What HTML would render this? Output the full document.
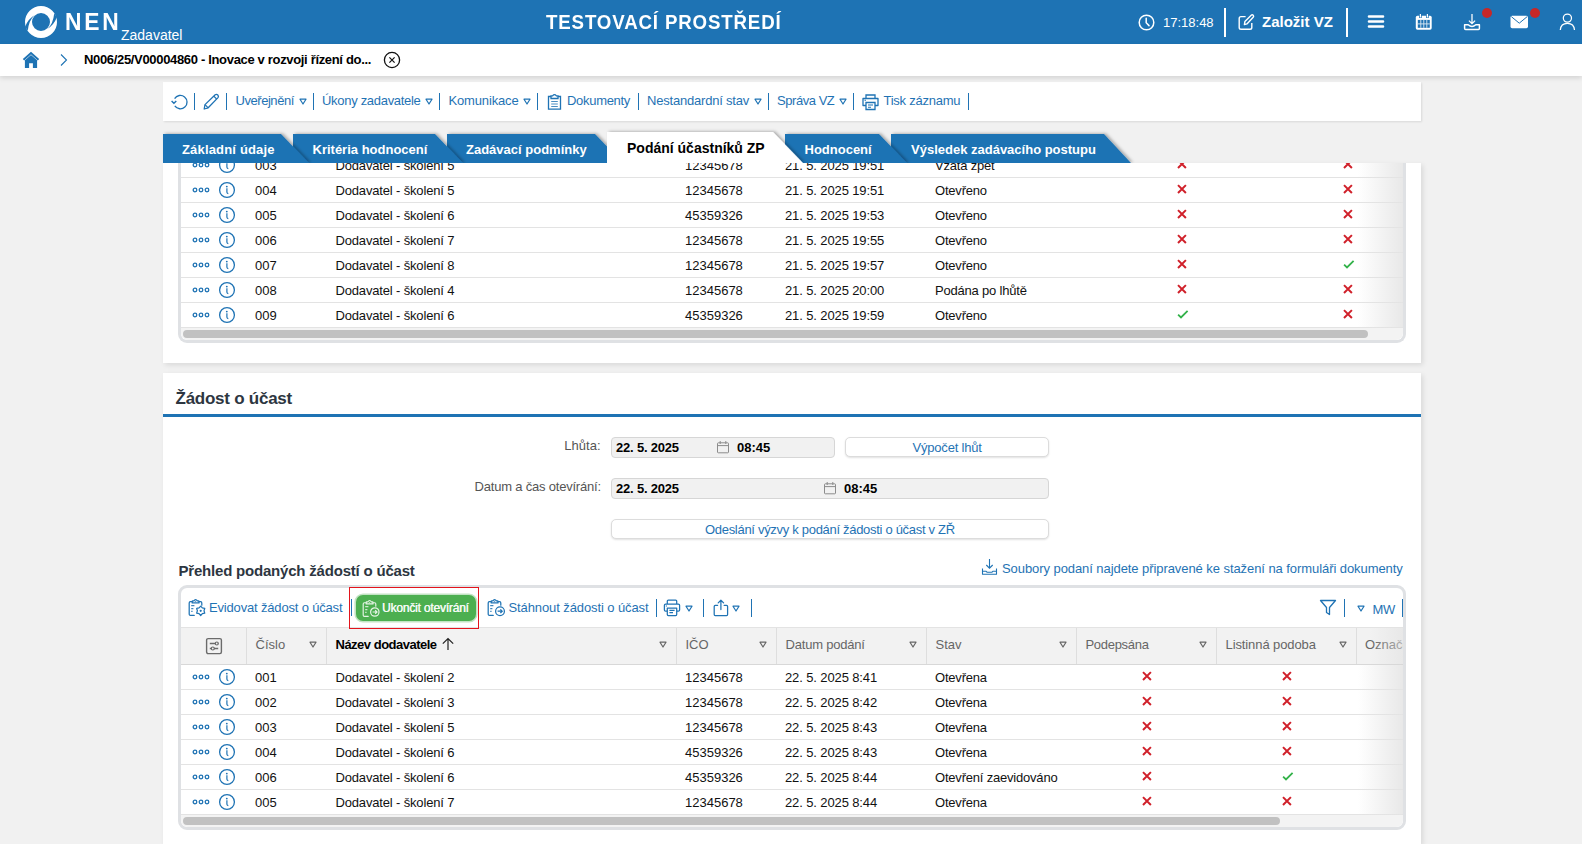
<!DOCTYPE html>
<html><head><meta charset="utf-8"><title>NEN</title>
<style>
html,body{margin:0;padding:0;width:1582px;height:844px;overflow:hidden;}
body{width:1582px;height:844px;overflow:hidden;position:relative;background:#f1f1f1;font-family:"Liberation Sans", sans-serif;}
.a{position:absolute;box-sizing:border-box;}
svg.a{overflow:visible}
.t{position:absolute;white-space:nowrap;font-family:"Liberation Sans", sans-serif;}
</style></head><body>
<div class="a" style="left:0px;top:0px;width:1582px;height:44px;background:#1e73b4"></div>
<svg class="a" style="left:24px;top:5px;" width="34" height="34" viewBox="0 0 34 34">
<circle cx="17" cy="17" r="12.5" fill="none" stroke="#fff" stroke-width="7"/>
<path d="M10.6 10.2 Q4.2 13.6 1.0 21.9 L3.8 25.6 Q4.8 15.2 10.6 10.2 Z" fill="#1e73b4"/>
<path d="M10.6 10.2 Q4.2 13.6 1.0 21.9 L3.8 25.6 Q4.8 15.2 10.6 10.2 Z" fill="#1e73b4" transform="rotate(180 17 17)"/>
</svg>
<div class="t" style="left:65px;top:10px;font-size:24px;line-height:24px;color:#fff;font-weight:bold;letter-spacing:2.9px;transform:scaleX(0.95);transform-origin:0 0">NEN</div>
<div class="t" style="left:121px;top:28px;font-size:14px;line-height:14px;color:#fff;">Zadavatel</div>
<div class="t" style="left:546px;top:12px;font-size:20px;line-height:20px;color:#fff;font-weight:bold;letter-spacing:0.9px;transform:scaleX(0.935);transform-origin:0 0">TESTOVACÍ PROSTŘEDÍ</div>
<svg class="a" style="left:1138px;top:14px;" width="17" height="17" viewBox="0 0 17 17"><circle cx="8.5" cy="8.5" r="7.3" fill="none" stroke="#fff" stroke-width="1.5"/><path d="M8.2 4.2 V8.8 L11 11.6" fill="none" stroke="#fff" stroke-width="1.5" stroke-linecap="round"/></svg>
<div class="t" style="left:1163px;top:16px;font-size:13px;line-height:13px;color:#fff;">17:18:48</div>
<div class="a" style="left:1224px;top:8px;width:2px;height:29px;background:#fff"></div>
<svg class="a" style="left:1237px;top:13px;" width="19" height="18" viewBox="0 0 19 18"><path d="M8.6 3.6 H4 Q2.2 3.6 2.2 5.4 V14.4 Q2.2 16.2 4 16.2 H13 Q14.8 16.2 14.8 14.4 V10" fill="none" stroke="#fff" stroke-width="1.4"/><path d="M7.4 11.6 L7.9 8.6 L14.2 2.2 Q15.2 1.3 16.2 2.2 Q17.1 3.2 16.2 4.2 L9.9 10.9 Z" fill="none" stroke="#fff" stroke-width="1.4" stroke-linejoin="round"/></svg>
<div class="t" style="left:1262px;top:14px;font-size:15px;line-height:15px;color:#fff;font-weight:bold;">Založit VZ</div>
<div class="a" style="left:1346px;top:8px;width:2px;height:29px;background:#fff"></div>
<svg class="a" style="left:1367px;top:14px;" width="18" height="16" viewBox="0 0 18 16"><path d="M2 2.5 H16 M2 7.5 H16 M2 12.5 H16" stroke="#fff" stroke-width="2.6" stroke-linecap="round"/></svg>
<svg class="a" style="left:1415px;top:13px;" width="18" height="18" viewBox="0 0 18 18"><rect x="0.8" y="2.8" width="15.9" height="13.9" rx="1.6" fill="#fff"/><rect x="2.8" y="6.9" width="12" height="7.9" fill="#1e73b4"/><path d="M5.8 6.9 V14.8 M8.8 6.9 V14.8 M11.8 6.9 V14.8 M2.8 10.9 H14.8" stroke="#fff" stroke-width="0.9" opacity="0.85"/><path d="M5.4 0.6 V5 M12.4 0.6 V5" stroke="#1e73b4" stroke-width="2.6"/><path d="M5.4 1 V4.6 M12.4 1 V4.6" stroke="#fff" stroke-width="1.2"/></svg>
<svg class="a" style="left:1463px;top:13px;" width="18" height="18" viewBox="0 0 18 18"><path d="M9 1 V10.6 M5.9 7.6 L9 10.7 L12.1 7.6" fill="none" stroke="#fff" stroke-width="1.25"/><path d="M1.6 11.8 H5.2 Q9 15.2 12.8 11.8 H16.4 V15.6 Q16.4 16.6 15.4 16.6 H2.6 Q1.6 16.6 1.6 15.6 Z" fill="none" stroke="#fff" stroke-width="1.5" stroke-linejoin="round"/></svg>
<div class="a" style="left:1482px;top:8px;width:10px;height:10px;border-radius:50%;background:#c62828"></div>
<svg class="a" style="left:1510px;top:15px;" width="19" height="14" viewBox="0 0 19 14"><rect x="0.5" y="0.8" width="17.5" height="12.4" rx="1.6" fill="#fff"/><path d="M1.3 1.6 L9.25 8.2 L17.2 1.6" fill="none" stroke="#1e73b4" stroke-width="1"/></svg>
<div class="a" style="left:1530px;top:8px;width:10px;height:10px;border-radius:50%;background:#c62828"></div>
<svg class="a" style="left:1559px;top:13px;" width="17" height="18" viewBox="0 0 17 18"><circle cx="8.4" cy="5.1" r="4.1" fill="none" stroke="#fff" stroke-width="1.25"/><path d="M1.3 17 C1.6 12.6 4.6 10.4 8.4 10.4 C12.2 10.4 15.2 12.6 15.5 17" fill="none" stroke="#fff" stroke-width="1.25"/></svg>
<div class="a" style="left:0px;top:44px;width:1582px;height:32px;background:#fff;box-shadow:0 2px 5px rgba(0,0,0,0.13);z-index:2"></div>
<svg class="a" style="left:22px;top:51px;z-index:3" width="18" height="18" viewBox="0 0 18 18"><path d="M1.5 8.8 L9 2 L16.5 8.8" fill="none" stroke="#1e73b4" stroke-width="2"/><path d="M2.9 9.3 L9 4 L15.1 9.3 V17 H10.9 V12.3 H7.1 V17 H2.9 Z" fill="#1e73b4"/></svg>
<svg class="a" style="left:59px;top:53px;z-index:3" width="10" height="14" viewBox="0 0 10 14"><path d="M2 1.5 L7.5 7 L2 12.5" fill="none" stroke="#1e73b4" stroke-width="1.1"/></svg>
<div class="t" style="left:84px;top:53px;font-size:13px;line-height:13px;color:#000;font-weight:bold;letter-spacing:-0.33px;z-index:3">N006/25/V00004860 - Inovace v rozvoji řízení do...</div>
<svg class="a" style="left:383px;top:51px;z-index:3" width="18" height="18" viewBox="0 0 18 18"><circle cx="9" cy="9" r="7.6" fill="none" stroke="#111" stroke-width="1.3"/><path d="M6.4 6.4 L11.6 11.6 M11.6 6.4 L6.4 11.6" stroke="#111" stroke-width="1.2"/></svg>
<div class="a" style="left:163px;top:82px;width:1258px;height:39px;background:#fff;box-shadow:1px 1px 2px rgba(0,0,0,0.1)"></div>
<svg class="a" style="left:169px;top:93px;" width="20" height="18" viewBox="0 0 20 18"><path d="M5.6 5.6 A6.7 6.7 0 1 1 5.8 12.9" fill="none" stroke="#1f73b4" stroke-width="1.3"/><path d="M2.6 7.9 L4.9 10.3 L7.3 7.9" fill="none" stroke="#1f73b4" stroke-width="1.4"/></svg>
<div class="a" style="left:194px;top:93px;width:1px;height:17px;background:#1f73b4"></div>
<svg class="a" style="left:202px;top:93px;" width="18" height="18" viewBox="0 0 18 18"><path d="M2.2 16 L3 11.6 L13.2 1.8 Q14.6 0.8 15.8 2 Q17 3.2 16 4.6 L6.2 14.8 Z" fill="none" stroke="#1f73b4" stroke-width="1.3" stroke-linejoin="round"/><path d="M11.8 3.2 L14.6 6 M3 11.6 L6.2 14.8" stroke="#1f73b4" stroke-width="1.2"/></svg>
<div class="a" style="left:226px;top:93px;width:1px;height:17px;background:#1f73b4"></div>
<div class="t" style="left:235.5px;top:94px;font-size:13px;line-height:13px;color:#1f73b4;letter-spacing:-0.45px;">Uveřejnění</div>
<svg class="a" style="left:298.5px;top:98px;" width="8" height="7" viewBox="0 0 8 7"><path d="M1 1.2 H7 L4 6 Z" fill="none" stroke="#1f73b4" stroke-width="1.2" stroke-linejoin="round"/></svg>
<div class="a" style="left:313px;top:93px;width:1px;height:17px;background:#1f73b4"></div>
<div class="t" style="left:322px;top:94px;font-size:13px;line-height:13px;color:#1f73b4;letter-spacing:-0.3px;">Úkony zadavatele</div>
<svg class="a" style="left:425px;top:98px;" width="8" height="7" viewBox="0 0 8 7"><path d="M1 1.2 H7 L4 6 Z" fill="none" stroke="#1f73b4" stroke-width="1.2" stroke-linejoin="round"/></svg>
<div class="a" style="left:439px;top:93px;width:1px;height:17px;background:#1f73b4"></div>
<div class="t" style="left:448.5px;top:94px;font-size:13px;line-height:13px;color:#1f73b4;letter-spacing:-0.15px;">Komunikace</div>
<svg class="a" style="left:523px;top:98px;" width="8" height="7" viewBox="0 0 8 7"><path d="M1 1.2 H7 L4 6 Z" fill="none" stroke="#1f73b4" stroke-width="1.2" stroke-linejoin="round"/></svg>
<div class="a" style="left:537px;top:93px;width:1px;height:17px;background:#1f73b4"></div>
<svg class="a" style="left:547px;top:93px;" width="15" height="18" viewBox="0 0 15 18"><path d="M4 3.5 H1.5 V16.2 H13.5 V3.5 H11" fill="none" stroke="#1f73b4" stroke-width="1.3"/><path d="M4 5.5 V2.8 H5.6 Q7.5 0.5 9.4 2.8 H11 V5.5 Z" fill="none" stroke="#1f73b4" stroke-width="1.3"/><path d="M4.2 8.5 H10.8 M4.2 11 H10.8 M4.2 13.5 H10.8" stroke="#1f73b4" stroke-width="1.2" opacity="0.8"/></svg>
<div class="t" style="left:567px;top:94px;font-size:13px;line-height:13px;color:#1f73b4;letter-spacing:-0.3px;">Dokumenty</div>
<div class="a" style="left:638px;top:93px;width:1px;height:17px;background:#1f73b4"></div>
<div class="t" style="left:647px;top:94px;font-size:13px;line-height:13px;color:#1f73b4;letter-spacing:-0.2px;">Nestandardní stav</div>
<svg class="a" style="left:753.5px;top:98px;" width="8" height="7" viewBox="0 0 8 7"><path d="M1 1.2 H7 L4 6 Z" fill="none" stroke="#1f73b4" stroke-width="1.2" stroke-linejoin="round"/></svg>
<div class="a" style="left:768px;top:93px;width:1px;height:17px;background:#1f73b4"></div>
<div class="t" style="left:777px;top:94px;font-size:13px;line-height:13px;color:#1f73b4;letter-spacing:-0.45px;">Správa VZ</div>
<svg class="a" style="left:839px;top:98px;" width="8" height="7" viewBox="0 0 8 7"><path d="M1 1.2 H7 L4 6 Z" fill="none" stroke="#1f73b4" stroke-width="1.2" stroke-linejoin="round"/></svg>
<div class="a" style="left:853px;top:93px;width:1px;height:17px;background:#1f73b4"></div>
<svg class="a" style="left:861px;top:93px;" width="19" height="18" viewBox="0 0 19 18"><path d="M5 5 V2 H14 V5" fill="none" stroke="#1f73b4" stroke-width="1.3"/><path d="M5 12.5 H2 V5.5 H17 V12.5 H14" fill="none" stroke="#1f73b4" stroke-width="1.3" stroke-linejoin="round"/><path d="M5 9.5 H14 V16.5 H5 Z" fill="none" stroke="#1f73b4" stroke-width="1.3"/><path d="M7 12 H12 M7 14.2 H10" stroke="#1f73b4" stroke-width="1.1"/><path d="M3.5 7.3 H5" stroke="#1f73b4" stroke-width="1.1"/></svg>
<div class="t" style="left:883.5px;top:94px;font-size:13px;line-height:13px;color:#1f73b4;letter-spacing:-0.25px;">Tisk záznamu</div>
<div class="a" style="left:968px;top:93px;width:1px;height:17px;background:#1f73b4"></div>
<div class="a" style="left:163px;top:163px;width:1258px;height:200px;background:#fff;box-shadow:2px 2px 5px rgba(0,0,0,0.1)"></div>
<div class="a" style="left:178px;top:163px;width:1228px;height:180px;border:3px solid #dfe1e4;border-top:none;border-radius:0 0 9px 9px;background:#fff"></div>
<div class="a" style="left:181px;top:163px;width:1222px;height:177px;overflow:hidden">
<svg class="a" style="left:10px;top:-1px;" width="19" height="6" viewBox="0 0 19 6"><circle cx="4" cy="3" r="1.8" fill="none" stroke="#1f73b4" stroke-width="1.3"/><circle cx="10" cy="3" r="1.8" fill="none" stroke="#1f73b4" stroke-width="1.3"/><circle cx="16" cy="3" r="1.8" fill="none" stroke="#1f73b4" stroke-width="1.3"/></svg>
<svg class="a" style="left:37px;top:-7px;" width="18" height="18" viewBox="0 0 18 18"><circle cx="9" cy="9" r="7.4" fill="none" stroke="#1f73b4" stroke-width="1.3"/><circle cx="8.8" cy="5.6" r="0.9" fill="#1f73b4"/><path d="M8.3 7.8 L8.9 7.8 L8.9 11.2 Q9 12.3 10.3 12.6" fill="none" stroke="#1f73b4" stroke-width="1.2"/></svg>
<div class="t" style="left:74px;top:-4px;font-size:13px;line-height:13px;color:#111;">003</div>
<div class="t" style="left:154.5px;top:-4px;font-size:13px;line-height:13px;color:#111;letter-spacing:-0.16px;">Dodavatel - školení 5</div>
<div class="t" style="left:504px;top:-4px;font-size:13px;line-height:13px;color:#111;">12345678</div>
<div class="t" style="left:604px;top:-4px;font-size:13px;line-height:13px;color:#111;letter-spacing:-0.12px;">21. 5. 2025 19:51</div>
<div class="t" style="left:754px;top:-4px;font-size:13px;line-height:13px;color:#111;letter-spacing:-0.2px;">Vzata zpet</div>
<svg class="a" style="left:996.4000000000001px;top:-4px;" width="10" height="10" viewBox="0 0 10 10"><path d="M1 1.1 L8.9 9 M8.9 1.1 L1 9" stroke="#d0202a" stroke-width="2"/></svg>
<svg class="a" style="left:1162.4px;top:-4px;" width="10" height="10" viewBox="0 0 10 10"><path d="M1 1.1 L8.9 9 M8.9 1.1 L1 9" stroke="#d0202a" stroke-width="2"/></svg>
<div class="a" style="left:0px;top:14px;width:1222px;height:1px;background:#e3e3e3"></div>
<svg class="a" style="left:10px;top:24px;" width="19" height="6" viewBox="0 0 19 6"><circle cx="4" cy="3" r="1.8" fill="none" stroke="#1f73b4" stroke-width="1.3"/><circle cx="10" cy="3" r="1.8" fill="none" stroke="#1f73b4" stroke-width="1.3"/><circle cx="16" cy="3" r="1.8" fill="none" stroke="#1f73b4" stroke-width="1.3"/></svg>
<svg class="a" style="left:37px;top:18px;" width="18" height="18" viewBox="0 0 18 18"><circle cx="9" cy="9" r="7.4" fill="none" stroke="#1f73b4" stroke-width="1.3"/><circle cx="8.8" cy="5.6" r="0.9" fill="#1f73b4"/><path d="M8.3 7.8 L8.9 7.8 L8.9 11.2 Q9 12.3 10.3 12.6" fill="none" stroke="#1f73b4" stroke-width="1.2"/></svg>
<div class="t" style="left:74px;top:21px;font-size:13px;line-height:13px;color:#111;">004</div>
<div class="t" style="left:154.5px;top:21px;font-size:13px;line-height:13px;color:#111;letter-spacing:-0.16px;">Dodavatel - školení 5</div>
<div class="t" style="left:504px;top:21px;font-size:13px;line-height:13px;color:#111;">12345678</div>
<div class="t" style="left:604px;top:21px;font-size:13px;line-height:13px;color:#111;letter-spacing:-0.12px;">21. 5. 2025 19:51</div>
<div class="t" style="left:754px;top:21px;font-size:13px;line-height:13px;color:#111;letter-spacing:-0.2px;">Otevřeno</div>
<svg class="a" style="left:996.4000000000001px;top:21px;" width="10" height="10" viewBox="0 0 10 10"><path d="M1 1.1 L8.9 9 M8.9 1.1 L1 9" stroke="#d0202a" stroke-width="2"/></svg>
<svg class="a" style="left:1162.4px;top:21px;" width="10" height="10" viewBox="0 0 10 10"><path d="M1 1.1 L8.9 9 M8.9 1.1 L1 9" stroke="#d0202a" stroke-width="2"/></svg>
<div class="a" style="left:0px;top:39px;width:1222px;height:1px;background:#e3e3e3"></div>
<svg class="a" style="left:10px;top:49px;" width="19" height="6" viewBox="0 0 19 6"><circle cx="4" cy="3" r="1.8" fill="none" stroke="#1f73b4" stroke-width="1.3"/><circle cx="10" cy="3" r="1.8" fill="none" stroke="#1f73b4" stroke-width="1.3"/><circle cx="16" cy="3" r="1.8" fill="none" stroke="#1f73b4" stroke-width="1.3"/></svg>
<svg class="a" style="left:37px;top:43px;" width="18" height="18" viewBox="0 0 18 18"><circle cx="9" cy="9" r="7.4" fill="none" stroke="#1f73b4" stroke-width="1.3"/><circle cx="8.8" cy="5.6" r="0.9" fill="#1f73b4"/><path d="M8.3 7.8 L8.9 7.8 L8.9 11.2 Q9 12.3 10.3 12.6" fill="none" stroke="#1f73b4" stroke-width="1.2"/></svg>
<div class="t" style="left:74px;top:46px;font-size:13px;line-height:13px;color:#111;">005</div>
<div class="t" style="left:154.5px;top:46px;font-size:13px;line-height:13px;color:#111;letter-spacing:-0.16px;">Dodavatel - školení 6</div>
<div class="t" style="left:504px;top:46px;font-size:13px;line-height:13px;color:#111;">45359326</div>
<div class="t" style="left:604px;top:46px;font-size:13px;line-height:13px;color:#111;letter-spacing:-0.12px;">21. 5. 2025 19:53</div>
<div class="t" style="left:754px;top:46px;font-size:13px;line-height:13px;color:#111;letter-spacing:-0.2px;">Otevřeno</div>
<svg class="a" style="left:996.4000000000001px;top:46px;" width="10" height="10" viewBox="0 0 10 10"><path d="M1 1.1 L8.9 9 M8.9 1.1 L1 9" stroke="#d0202a" stroke-width="2"/></svg>
<svg class="a" style="left:1162.4px;top:46px;" width="10" height="10" viewBox="0 0 10 10"><path d="M1 1.1 L8.9 9 M8.9 1.1 L1 9" stroke="#d0202a" stroke-width="2"/></svg>
<div class="a" style="left:0px;top:64px;width:1222px;height:1px;background:#e3e3e3"></div>
<svg class="a" style="left:10px;top:74px;" width="19" height="6" viewBox="0 0 19 6"><circle cx="4" cy="3" r="1.8" fill="none" stroke="#1f73b4" stroke-width="1.3"/><circle cx="10" cy="3" r="1.8" fill="none" stroke="#1f73b4" stroke-width="1.3"/><circle cx="16" cy="3" r="1.8" fill="none" stroke="#1f73b4" stroke-width="1.3"/></svg>
<svg class="a" style="left:37px;top:68px;" width="18" height="18" viewBox="0 0 18 18"><circle cx="9" cy="9" r="7.4" fill="none" stroke="#1f73b4" stroke-width="1.3"/><circle cx="8.8" cy="5.6" r="0.9" fill="#1f73b4"/><path d="M8.3 7.8 L8.9 7.8 L8.9 11.2 Q9 12.3 10.3 12.6" fill="none" stroke="#1f73b4" stroke-width="1.2"/></svg>
<div class="t" style="left:74px;top:71px;font-size:13px;line-height:13px;color:#111;">006</div>
<div class="t" style="left:154.5px;top:71px;font-size:13px;line-height:13px;color:#111;letter-spacing:-0.16px;">Dodavatel - školení 7</div>
<div class="t" style="left:504px;top:71px;font-size:13px;line-height:13px;color:#111;">12345678</div>
<div class="t" style="left:604px;top:71px;font-size:13px;line-height:13px;color:#111;letter-spacing:-0.12px;">21. 5. 2025 19:55</div>
<div class="t" style="left:754px;top:71px;font-size:13px;line-height:13px;color:#111;letter-spacing:-0.2px;">Otevřeno</div>
<svg class="a" style="left:996.4000000000001px;top:71px;" width="10" height="10" viewBox="0 0 10 10"><path d="M1 1.1 L8.9 9 M8.9 1.1 L1 9" stroke="#d0202a" stroke-width="2"/></svg>
<svg class="a" style="left:1162.4px;top:71px;" width="10" height="10" viewBox="0 0 10 10"><path d="M1 1.1 L8.9 9 M8.9 1.1 L1 9" stroke="#d0202a" stroke-width="2"/></svg>
<div class="a" style="left:0px;top:89px;width:1222px;height:1px;background:#e3e3e3"></div>
<svg class="a" style="left:10px;top:99px;" width="19" height="6" viewBox="0 0 19 6"><circle cx="4" cy="3" r="1.8" fill="none" stroke="#1f73b4" stroke-width="1.3"/><circle cx="10" cy="3" r="1.8" fill="none" stroke="#1f73b4" stroke-width="1.3"/><circle cx="16" cy="3" r="1.8" fill="none" stroke="#1f73b4" stroke-width="1.3"/></svg>
<svg class="a" style="left:37px;top:93px;" width="18" height="18" viewBox="0 0 18 18"><circle cx="9" cy="9" r="7.4" fill="none" stroke="#1f73b4" stroke-width="1.3"/><circle cx="8.8" cy="5.6" r="0.9" fill="#1f73b4"/><path d="M8.3 7.8 L8.9 7.8 L8.9 11.2 Q9 12.3 10.3 12.6" fill="none" stroke="#1f73b4" stroke-width="1.2"/></svg>
<div class="t" style="left:74px;top:96px;font-size:13px;line-height:13px;color:#111;">007</div>
<div class="t" style="left:154.5px;top:96px;font-size:13px;line-height:13px;color:#111;letter-spacing:-0.16px;">Dodavatel - školení 8</div>
<div class="t" style="left:504px;top:96px;font-size:13px;line-height:13px;color:#111;">12345678</div>
<div class="t" style="left:604px;top:96px;font-size:13px;line-height:13px;color:#111;letter-spacing:-0.12px;">21. 5. 2025 19:57</div>
<div class="t" style="left:754px;top:96px;font-size:13px;line-height:13px;color:#111;letter-spacing:-0.2px;">Otevřeno</div>
<svg class="a" style="left:996.4000000000001px;top:96px;" width="10" height="10" viewBox="0 0 10 10"><path d="M1 1.1 L8.9 9 M8.9 1.1 L1 9" stroke="#d0202a" stroke-width="2"/></svg>
<svg class="a" style="left:1161.8px;top:96px;" width="12" height="10" viewBox="0 0 12 10"><path d="M1.1 5.6 L4 8.4 L10.6 1.9" fill="none" stroke="#33b24a" stroke-width="1.8"/></svg>
<div class="a" style="left:0px;top:114px;width:1222px;height:1px;background:#e3e3e3"></div>
<svg class="a" style="left:10px;top:124px;" width="19" height="6" viewBox="0 0 19 6"><circle cx="4" cy="3" r="1.8" fill="none" stroke="#1f73b4" stroke-width="1.3"/><circle cx="10" cy="3" r="1.8" fill="none" stroke="#1f73b4" stroke-width="1.3"/><circle cx="16" cy="3" r="1.8" fill="none" stroke="#1f73b4" stroke-width="1.3"/></svg>
<svg class="a" style="left:37px;top:118px;" width="18" height="18" viewBox="0 0 18 18"><circle cx="9" cy="9" r="7.4" fill="none" stroke="#1f73b4" stroke-width="1.3"/><circle cx="8.8" cy="5.6" r="0.9" fill="#1f73b4"/><path d="M8.3 7.8 L8.9 7.8 L8.9 11.2 Q9 12.3 10.3 12.6" fill="none" stroke="#1f73b4" stroke-width="1.2"/></svg>
<div class="t" style="left:74px;top:121px;font-size:13px;line-height:13px;color:#111;">008</div>
<div class="t" style="left:154.5px;top:121px;font-size:13px;line-height:13px;color:#111;letter-spacing:-0.16px;">Dodavatel - školení 4</div>
<div class="t" style="left:504px;top:121px;font-size:13px;line-height:13px;color:#111;">12345678</div>
<div class="t" style="left:604px;top:121px;font-size:13px;line-height:13px;color:#111;letter-spacing:-0.12px;">21. 5. 2025 20:00</div>
<div class="t" style="left:754px;top:121px;font-size:13px;line-height:13px;color:#111;letter-spacing:-0.2px;">Podána po lhůtě</div>
<svg class="a" style="left:996.4000000000001px;top:121px;" width="10" height="10" viewBox="0 0 10 10"><path d="M1 1.1 L8.9 9 M8.9 1.1 L1 9" stroke="#d0202a" stroke-width="2"/></svg>
<svg class="a" style="left:1162.4px;top:121px;" width="10" height="10" viewBox="0 0 10 10"><path d="M1 1.1 L8.9 9 M8.9 1.1 L1 9" stroke="#d0202a" stroke-width="2"/></svg>
<div class="a" style="left:0px;top:139px;width:1222px;height:1px;background:#e3e3e3"></div>
<svg class="a" style="left:10px;top:149px;" width="19" height="6" viewBox="0 0 19 6"><circle cx="4" cy="3" r="1.8" fill="none" stroke="#1f73b4" stroke-width="1.3"/><circle cx="10" cy="3" r="1.8" fill="none" stroke="#1f73b4" stroke-width="1.3"/><circle cx="16" cy="3" r="1.8" fill="none" stroke="#1f73b4" stroke-width="1.3"/></svg>
<svg class="a" style="left:37px;top:143px;" width="18" height="18" viewBox="0 0 18 18"><circle cx="9" cy="9" r="7.4" fill="none" stroke="#1f73b4" stroke-width="1.3"/><circle cx="8.8" cy="5.6" r="0.9" fill="#1f73b4"/><path d="M8.3 7.8 L8.9 7.8 L8.9 11.2 Q9 12.3 10.3 12.6" fill="none" stroke="#1f73b4" stroke-width="1.2"/></svg>
<div class="t" style="left:74px;top:146px;font-size:13px;line-height:13px;color:#111;">009</div>
<div class="t" style="left:154.5px;top:146px;font-size:13px;line-height:13px;color:#111;letter-spacing:-0.16px;">Dodavatel - školení 6</div>
<div class="t" style="left:504px;top:146px;font-size:13px;line-height:13px;color:#111;">45359326</div>
<div class="t" style="left:604px;top:146px;font-size:13px;line-height:13px;color:#111;letter-spacing:-0.12px;">21. 5. 2025 19:59</div>
<div class="t" style="left:754px;top:146px;font-size:13px;line-height:13px;color:#111;letter-spacing:-0.2px;">Otevřeno</div>
<svg class="a" style="left:995.8px;top:146px;" width="12" height="10" viewBox="0 0 12 10"><path d="M1.1 5.6 L4 8.4 L10.6 1.9" fill="none" stroke="#33b24a" stroke-width="1.8"/></svg>
<svg class="a" style="left:1162.4px;top:146px;" width="10" height="10" viewBox="0 0 10 10"><path d="M1 1.1 L8.9 9 M8.9 1.1 L1 9" stroke="#d0202a" stroke-width="2"/></svg>
<div class="a" style="left:0px;top:164px;width:1222px;height:1px;background:#e3e3e3"></div>
<div class="a" style="left:0px;top:165px;width:1222px;height:12px;background:#f3f3f3;border-radius:0 0 7px 7px"></div>
<div class="a" style="left:2px;top:167px;width:1185px;height:8px;background:#c1c1c1;border-radius:4px"></div>
<div class="a" style="left:1177px;top:0px;width:45px;height:165px;background:linear-gradient(to right, rgba(235,235,235,0), rgba(228,228,228,0.85))"></div>
</div>
<svg class="a" style="left:155px;top:125px;z-index:4;overflow:hidden" width="1000" height="38" viewBox="155 125 1000 38">
<defs>
<filter id="sh" x="-10%" y="-30%" width="130%" height="160%"><feDropShadow dx="2" dy="-0.5" stdDeviation="1.4" flood-color="#000" flood-opacity="0.3"/></filter>
<filter id="sh2" x="-10%" y="-30%" width="130%" height="160%"><feDropShadow dx="0" dy="-1" stdDeviation="0.8" flood-color="#000" flood-opacity="0.15"/></filter>
</defs>
<g filter="url(#sh)">
<polygon points="891,134 1104,134 1131,163 891,163" fill="#1e73b4"/>
</g>
<g filter="url(#sh)">
<polygon points="785,134 879,134 907,163 785,163" fill="#1e73b4"/>
</g>
<g filter="url(#sh)">
<polygon points="447,134 595,134 623,163 447,163" fill="#1e73b4"/>
</g>
<g filter="url(#sh)">
<polygon points="293,134 435,134 463,163 293,163" fill="#1e73b4"/>
</g>
<g filter="url(#sh)">
<polygon points="163,134 281,134 309,163 163,163" fill="#1e73b4"/>
</g>
<g filter="url(#sh)">
<polygon points="607,132 773,132 803,163 607,163" fill="#fff"/>
</g>
</svg>
<div class="t" style="left:182px;top:143px;font-size:13px;line-height:13px;color:#fff;font-weight:bold;letter-spacing:0.17px;z-index:5">Základní údaje</div>
<div class="t" style="left:312.5px;top:143px;font-size:13px;line-height:13px;color:#fff;font-weight:bold;z-index:5">Kritéria hodnocení</div>
<div class="t" style="left:466px;top:143px;font-size:13px;line-height:13px;color:#fff;font-weight:bold;z-index:5">Zadávací podmínky</div>
<div class="t" style="left:627px;top:141px;font-size:14px;line-height:14px;color:#000;font-weight:bold;z-index:5">Podání účastníků ZP</div>
<div class="t" style="left:804.5px;top:143px;font-size:13px;line-height:13px;color:#fff;font-weight:bold;z-index:5">Hodnocení</div>
<div class="t" style="left:911px;top:143px;font-size:13px;line-height:13px;color:#fff;font-weight:bold;z-index:5">Výsledek zadávacího postupu</div>
<div class="a" style="left:163px;top:373px;width:1258px;height:471px;background:#fff;box-shadow:2px 2px 5px rgba(0,0,0,0.1)"></div>
<div class="t" style="left:175.5px;top:390px;font-size:17px;line-height:17px;color:#2d3641;font-weight:bold;letter-spacing:-0.25px;">Žádost o účast</div>
<div class="a" style="left:163px;top:414px;width:1258px;height:3px;background:#1e73b4"></div>
<div class="t" style="left:474.5px;top:439px;font-size:13px;line-height:13px;color:#555;width:126px;text-align:right;left:474.5px">Lhůta:</div>
<div class="t" style="left:474.5px;top:480px;font-size:13px;line-height:13px;color:#555;letter-spacing:-0.2px;">Datum a čas otevírání:</div>
<div class="a" style="left:611px;top:437px;width:224px;height:21px;background:#f1f1f1;border:1px solid #d6d6d6;border-radius:4px"></div>
<div class="t" style="left:616px;top:441px;font-size:13px;line-height:13px;color:#000;font-weight:bold;letter-spacing:-0.2px;">22. 5. 2025</div>
<svg class="a" style="left:716px;top:440px;" width="14" height="14" viewBox="0 0 14 14"><rect x="1.5" y="2.8" width="11" height="10" rx="0.8" fill="none" stroke="#8c8c8c" stroke-width="1"/><path d="M1.5 5.6 H12.5 M4.2 1 V4 M9.8 1 V4" stroke="#8c8c8c" stroke-width="1"/></svg>
<div class="t" style="left:737px;top:441px;font-size:13px;line-height:13px;color:#000;font-weight:bold;">08:45</div>
<div class="a" style="left:845px;top:437px;width:204px;height:20px;background:#fff;border:1px solid #dcdcdc;border-radius:5px;box-shadow:0 1px 2px rgba(0,0,0,0.12)"></div>
<div class="t" style="left:912.5px;top:441px;font-size:13px;line-height:13px;color:#1f73b4;letter-spacing:-0.2px;">Výpočet lhůt</div>
<div class="a" style="left:611px;top:478px;width:438px;height:21px;background:#f1f1f1;border:1px solid #d6d6d6;border-radius:4px"></div>
<div class="t" style="left:616px;top:482px;font-size:13px;line-height:13px;color:#000;font-weight:bold;letter-spacing:-0.2px;">22. 5. 2025</div>
<svg class="a" style="left:823px;top:481px;" width="14" height="14" viewBox="0 0 14 14"><rect x="1.5" y="2.8" width="11" height="10" rx="0.8" fill="none" stroke="#8c8c8c" stroke-width="1"/><path d="M1.5 5.6 H12.5 M4.2 1 V4 M9.8 1 V4" stroke="#8c8c8c" stroke-width="1"/></svg>
<div class="t" style="left:844px;top:482px;font-size:13px;line-height:13px;color:#000;font-weight:bold;">08:45</div>
<div class="a" style="left:611px;top:519px;width:438px;height:20px;background:#fff;border:1px solid #dcdcdc;border-radius:5px;box-shadow:0 1px 2px rgba(0,0,0,0.12)"></div>
<div class="t" style="left:705px;top:523px;font-size:13px;line-height:13px;color:#1f73b4;letter-spacing:-0.3px;">Odeslání výzvy k podání žádosti o účast v ZŘ</div>
<div class="t" style="left:178.5px;top:563px;font-size:15px;line-height:15px;color:#2d3641;font-weight:bold;letter-spacing:-0.2px;">Přehled podaných žádostí o účast</div>
<svg class="a" style="left:980px;top:557px;" width="19" height="19" viewBox="0 0 19 19"><path d="M9.5 2 V11 M6.3 8 L9.5 11.2 L12.7 8" fill="none" stroke="#1f73b4" stroke-width="1.1"/><path d="M2.5 11.5 V17.2 H16.5 V11.5" fill="none" stroke="#1f73b4" stroke-width="1.1" stroke-linejoin="round"/><path d="M2.5 14.2 H6 L7 15.2 H12 L13 14.2 H16.5" fill="none" stroke="#1f73b4" stroke-width="1.1"/></svg>
<div class="t" style="left:1002px;top:562px;font-size:13px;line-height:13px;color:#1f73b4;letter-spacing:-0.07px;">Soubory podaní najdete připravené ke stažení na formuláři dokumenty</div>
<div class="a" style="left:178px;top:585px;width:1228px;height:245px;border:3px solid #dfe1e4;border-radius:9px;background:#fff"></div>
<svg class="a" style="left:187px;top:598px;" width="20" height="20" viewBox="0 0 20 20"><g fill="none" stroke="#1f73b4" stroke-width="1.25" stroke-linejoin="round" stroke-linecap="round"><path d="M7.2 17.4 H3.4 Q2.2 17.4 2.2 16.2 V4.9 Q2.2 3.7 3.4 3.7 H5.2"/><path d="M12 3.7 H13.6 Q14.8 3.7 14.8 4.9 V7.2"/><path d="M5.2 4.9 V3.4 Q5.2 2.9 5.7 2.9 H6.9 Q7.6 1.5 8.6 1.5 Q9.6 1.5 10.3 2.9 H11.5 Q12 2.9 12 3.4 V4.9 Z"/></g><circle cx="8.6" cy="3.2" r="0.55" fill="#1f73b4"/><path d="M4.2 7.6 H7.4 M4.2 10.6 H6.4 M4.2 13.4 H5.6" stroke="#1f73b4" stroke-width="1.2" opacity="0.85"/><path d="M13.70 8.10 L15.35 9.94 L17.77 10.45 L17.00 12.80 L17.77 15.15 L15.35 15.66 L13.70 17.50 L12.05 15.66 L9.63 15.15 L10.40 12.80 L9.63 10.45 L12.05 9.94 Z" fill="none" stroke="#1f73b4" stroke-width="1.2" stroke-linejoin="round"/><circle cx="13.7" cy="12.8" r="1.1" fill="#1f73b4"/></svg>
<div class="t" style="left:209px;top:601px;font-size:13px;line-height:13px;color:#1f73b4;letter-spacing:-0.17px;">Evidovat žádost o účast</div>
<div class="a" style="left:349px;top:587px;width:130px;height:42px;border:1.6px solid #e3141c;box-sizing:border-box;z-index:3"></div>
<div class="a" style="left:350.5px;top:599px;width:1.2px;height:17px;background:#1f73b4;z-index:4"></div>
<div class="a" style="left:356px;top:595px;width:120px;height:26px;background:#4caf50;border-radius:7px;box-shadow:0 0 0 1.6px #c3e3c4"></div>
<svg class="a" style="left:360.5px;top:598.5px;" width="20" height="20" viewBox="0 0 20 20"><g fill="none" stroke="#e6f4e6" stroke-width="1.15" stroke-linejoin="round" stroke-linecap="round"><path d="M7.2 17.4 H3.4 Q2.2 17.4 2.2 16.2 V4.9 Q2.2 3.7 3.4 3.7 H5.2"/><path d="M12 3.7 H13.6 Q14.8 3.7 14.8 4.9 V7.2"/><path d="M5.2 4.9 V3.4 Q5.2 2.9 5.7 2.9 H6.9 Q7.6 1.5 8.6 1.5 Q9.6 1.5 10.3 2.9 H11.5 Q12 2.9 12 3.4 V4.9 Z"/></g><circle cx="8.6" cy="3.2" r="0.55" fill="#e6f4e6"/><path d="M4.2 7.6 H7.4 M4.2 10.6 H6.4 M4.2 13.4 H5.6" stroke="#e6f4e6" stroke-width="1.2" opacity="0.85"/><circle cx="13.8" cy="13" r="4.2" fill="none" stroke="#e6f4e6" stroke-width="1.2"/><path d="M11.6 13 H16 M14.2 11.3 L16 13 L14.2 14.7" fill="none" stroke="#e6f4e6" stroke-width="1.2"/></svg>
<div class="t" style="left:382px;top:602px;font-size:12px;line-height:12px;color:#f4faf4;letter-spacing:-0.2px;text-shadow:0.35px 0 0 #f4faf4">Ukončit otevírání</div>
<svg class="a" style="left:486px;top:598px;" width="20" height="20" viewBox="0 0 20 20"><g fill="none" stroke="#1f73b4" stroke-width="1.25" stroke-linejoin="round" stroke-linecap="round"><path d="M7.2 17.4 H3.4 Q2.2 17.4 2.2 16.2 V4.9 Q2.2 3.7 3.4 3.7 H5.2"/><path d="M12 3.7 H13.6 Q14.8 3.7 14.8 4.9 V7.2"/><path d="M5.2 4.9 V3.4 Q5.2 2.9 5.7 2.9 H6.9 Q7.6 1.5 8.6 1.5 Q9.6 1.5 10.3 2.9 H11.5 Q12 2.9 12 3.4 V4.9 Z"/></g><circle cx="8.6" cy="3.2" r="0.55" fill="#1f73b4"/><path d="M4.2 7.6 H7.4 M4.2 10.6 H6.4 M4.2 13.4 H5.6" stroke="#1f73b4" stroke-width="1.2" opacity="0.85"/><circle cx="14" cy="13.2" r="4.4" fill="none" stroke="#1f73b4" stroke-width="1.25"/><path d="M11.6 13.2 H16.2 M14.4 11.4 L16.2 13.2 L14.4 15" fill="none" stroke="#1f73b4" stroke-width="1.25"/></svg>
<div class="t" style="left:508.5px;top:601px;font-size:13px;line-height:13px;color:#1f73b4;letter-spacing:-0.1px;">Stáhnout žádosti o účast</div>
<div class="a" style="left:656px;top:599px;width:1px;height:18px;background:#1f73b4"></div>
<svg class="a" style="left:662px;top:598px;" width="20" height="20" viewBox="0 0 20 20"><g fill="none" stroke="#1f73b4" stroke-width="1.25" stroke-linejoin="round"><path d="M5.3 6 V3 Q5.3 2 6.3 2 H13.7 Q14.7 2 14.7 3 V6"/><path d="M5.3 13.2 H3.6 Q2.4 13.2 2.4 12 V7.2 Q2.4 6 3.6 6 H16.4 Q17.6 6 17.6 7.2 V12 Q17.6 13.2 16.4 13.2 H14.7"/><path d="M5.3 10 H14.7 V16.6 Q14.7 17.6 13.7 17.6 H6.3 Q5.3 17.6 5.3 16.6 Z"/><path d="M7.4 12.4 H12.6 M7.4 14.6 H11"/></g><path d="M3.8 8 H5" stroke="#1f73b4" stroke-width="1"/></svg>
<svg class="a" style="left:684.5px;top:604.6px;" width="8" height="7" viewBox="0 0 8 7"><path d="M1 1.2 H7 L4 6 Z" fill="none" stroke="#1f73b4" stroke-width="1.2" stroke-linejoin="round"/></svg>
<div class="a" style="left:703px;top:599px;width:1px;height:18px;background:#1f73b4"></div>
<svg class="a" style="left:712px;top:598px;" width="18" height="20" viewBox="0 0 18 20"><g fill="none" stroke="#1f73b4" stroke-width="1.25" stroke-linejoin="round" stroke-linecap="round"><path d="M5.6 7.4 H3.2 Q2.2 7.4 2.2 8.4 V16.6 Q2.2 17.6 3.2 17.6 H14.6 Q15.6 17.6 15.6 16.6 V8.4 Q15.6 7.4 14.6 7.4 H12.2"/><path d="M8.9 11.6 V2.2 M6.2 4.9 L8.9 2.2 L11.6 4.9"/></g></svg>
<svg class="a" style="left:732.2px;top:604.6px;" width="8" height="7" viewBox="0 0 8 7"><path d="M1 1.2 H7 L4 6 Z" fill="none" stroke="#1f73b4" stroke-width="1.2" stroke-linejoin="round"/></svg>
<div class="a" style="left:751px;top:599px;width:1px;height:18px;background:#1f73b4"></div>
<svg class="a" style="left:1318px;top:598px;" width="20" height="18" viewBox="0 0 20 18"><path d="M2.5 2.5 H17.5 L11.5 9.5 V16.5 L8.5 14.5 V9.5 Z" fill="none" stroke="#1f73b4" stroke-width="1.3" stroke-linejoin="round"/></svg>
<div class="a" style="left:1344px;top:599px;width:1px;height:18px;background:#1f73b4"></div>
<svg class="a" style="left:1356.5px;top:604.5px;" width="8" height="7" viewBox="0 0 8 7"><path d="M1 1.2 H7 L4 6 Z" fill="none" stroke="#1f73b4" stroke-width="1.2" stroke-linejoin="round"/></svg>
<div class="t" style="left:1372.5px;top:603px;font-size:13px;line-height:13px;color:#1f73b4;letter-spacing:-0.3px;">MW</div>
<div class="a" style="left:1402px;top:599px;width:1px;height:18px;background:#1f73b4"></div>
<div class="a" style="left:181px;top:627px;width:1222px;height:38px;background:#f2f2f2;border-top:1px solid #e3e3e3;border-bottom:1px solid #d8d8d8;box-sizing:border-box"></div>
<div class="a" style="left:246px;top:628px;width:1px;height:36px;background:#dedede"></div>
<div class="a" style="left:326px;top:628px;width:1px;height:36px;background:#dedede"></div>
<div class="a" style="left:676px;top:628px;width:1px;height:36px;background:#dedede"></div>
<div class="a" style="left:776px;top:628px;width:1px;height:36px;background:#dedede"></div>
<div class="a" style="left:926px;top:628px;width:1px;height:36px;background:#dedede"></div>
<div class="a" style="left:1076px;top:628px;width:1px;height:36px;background:#dedede"></div>
<div class="a" style="left:1216px;top:628px;width:1px;height:36px;background:#dedede"></div>
<div class="a" style="left:1356px;top:628px;width:1px;height:36px;background:#dedede"></div>
<svg class="a" style="left:205px;top:637px;" width="18" height="18" viewBox="0 0 18 18"><rect x="1.6" y="1.6" width="14.8" height="15" rx="1.5" fill="none" stroke="#6b6b6b" stroke-width="1.4"/><path d="M4.8 6.5 H10.5 M12.8 6.5 H13.2 M4.8 11.5 H6.5 M9 11.5 H13.2" stroke="#6b6b6b" stroke-width="1.3"/><circle cx="11.8" cy="6.5" r="1.5" fill="none" stroke="#6b6b6b" stroke-width="1.2"/><circle cx="7.8" cy="11.5" r="1.5" fill="none" stroke="#6b6b6b" stroke-width="1.2"/></svg>
<div class="t" style="left:255.5px;top:638px;font-size:13px;line-height:13px;color:#666;">Číslo</div>
<svg class="a" style="left:308.5px;top:641px;" width="8" height="7" viewBox="0 0 8 7"><path d="M1 1.2 H7 L4 6 Z" fill="none" stroke="#666" stroke-width="1.2" stroke-linejoin="round"/></svg>
<div class="t" style="left:335.5px;top:638px;font-size:13px;line-height:13px;color:#000;font-weight:bold;letter-spacing:-0.5px;">Název dodavatele</div>
<svg class="a" style="left:441px;top:637px;" width="14" height="14" viewBox="0 0 14 14"><path d="M7 13 V1.5 M1.8 6.7 L7 1.5 L12.2 6.7" fill="none" stroke="#222" stroke-width="1.2"/></svg>
<svg class="a" style="left:658.5px;top:641px;" width="8" height="7" viewBox="0 0 8 7"><path d="M1 1.2 H7 L4 6 Z" fill="none" stroke="#666" stroke-width="1.2" stroke-linejoin="round"/></svg>
<div class="t" style="left:685.5px;top:638px;font-size:13px;line-height:13px;color:#666;">IČO</div>
<svg class="a" style="left:758.5px;top:641px;" width="8" height="7" viewBox="0 0 8 7"><path d="M1 1.2 H7 L4 6 Z" fill="none" stroke="#666" stroke-width="1.2" stroke-linejoin="round"/></svg>
<div class="t" style="left:785.5px;top:638px;font-size:13px;line-height:13px;color:#666;letter-spacing:-0.2px;">Datum podání</div>
<svg class="a" style="left:908.5px;top:641px;" width="8" height="7" viewBox="0 0 8 7"><path d="M1 1.2 H7 L4 6 Z" fill="none" stroke="#666" stroke-width="1.2" stroke-linejoin="round"/></svg>
<div class="t" style="left:935.5px;top:638px;font-size:13px;line-height:13px;color:#666;">Stav</div>
<svg class="a" style="left:1058.5px;top:641px;" width="8" height="7" viewBox="0 0 8 7"><path d="M1 1.2 H7 L4 6 Z" fill="none" stroke="#666" stroke-width="1.2" stroke-linejoin="round"/></svg>
<div class="t" style="left:1085.5px;top:638px;font-size:13px;line-height:13px;color:#666;letter-spacing:-0.3px;">Podepsána</div>
<svg class="a" style="left:1198.5px;top:641px;" width="8" height="7" viewBox="0 0 8 7"><path d="M1 1.2 H7 L4 6 Z" fill="none" stroke="#666" stroke-width="1.2" stroke-linejoin="round"/></svg>
<div class="t" style="left:1225.5px;top:638px;font-size:13px;line-height:13px;color:#666;letter-spacing:-0.1px;">Listinná podoba</div>
<svg class="a" style="left:1338.5px;top:641px;" width="8" height="7" viewBox="0 0 8 7"><path d="M1 1.2 H7 L4 6 Z" fill="none" stroke="#666" stroke-width="1.2" stroke-linejoin="round"/></svg>
<div class="a" style="left:1365px;top:638px;width:38px;height:14px;overflow:hidden"><div class="t" style="left:0;top:0;font-size:13px;line-height:13px;color:#666">Označení</div></div>
<svg class="a" style="left:191px;top:674px;" width="19" height="6" viewBox="0 0 19 6"><circle cx="4" cy="3" r="1.8" fill="none" stroke="#1f73b4" stroke-width="1.3"/><circle cx="10" cy="3" r="1.8" fill="none" stroke="#1f73b4" stroke-width="1.3"/><circle cx="16" cy="3" r="1.8" fill="none" stroke="#1f73b4" stroke-width="1.3"/></svg>
<svg class="a" style="left:218px;top:668px;" width="18" height="18" viewBox="0 0 18 18"><circle cx="9" cy="9" r="7.4" fill="none" stroke="#1f73b4" stroke-width="1.3"/><circle cx="8.8" cy="5.6" r="0.9" fill="#1f73b4"/><path d="M8.3 7.8 L8.9 7.8 L8.9 11.2 Q9 12.3 10.3 12.6" fill="none" stroke="#1f73b4" stroke-width="1.2"/></svg>
<div class="t" style="left:255px;top:671px;font-size:13px;line-height:13px;color:#111;">001</div>
<div class="t" style="left:335.5px;top:671px;font-size:13px;line-height:13px;color:#111;letter-spacing:-0.16px;">Dodavatel - školení 2</div>
<div class="t" style="left:685px;top:671px;font-size:13px;line-height:13px;color:#111;">12345678</div>
<div class="t" style="left:785px;top:671px;font-size:13px;line-height:13px;color:#111;letter-spacing:-0.12px;">22. 5. 2025 8:41</div>
<div class="t" style="left:935px;top:671px;font-size:13px;line-height:13px;color:#111;letter-spacing:-0.2px;">Otevřena</div>
<svg class="a" style="left:1142.4px;top:671px;" width="10" height="10" viewBox="0 0 10 10"><path d="M1 1.1 L8.9 9 M8.9 1.1 L1 9" stroke="#d0202a" stroke-width="2"/></svg>
<svg class="a" style="left:1282.4px;top:671px;" width="10" height="10" viewBox="0 0 10 10"><path d="M1 1.1 L8.9 9 M8.9 1.1 L1 9" stroke="#d0202a" stroke-width="2"/></svg>
<div class="a" style="left:181px;top:689px;width:1222px;height:1px;background:#e3e3e3"></div>
<svg class="a" style="left:191px;top:699px;" width="19" height="6" viewBox="0 0 19 6"><circle cx="4" cy="3" r="1.8" fill="none" stroke="#1f73b4" stroke-width="1.3"/><circle cx="10" cy="3" r="1.8" fill="none" stroke="#1f73b4" stroke-width="1.3"/><circle cx="16" cy="3" r="1.8" fill="none" stroke="#1f73b4" stroke-width="1.3"/></svg>
<svg class="a" style="left:218px;top:693px;" width="18" height="18" viewBox="0 0 18 18"><circle cx="9" cy="9" r="7.4" fill="none" stroke="#1f73b4" stroke-width="1.3"/><circle cx="8.8" cy="5.6" r="0.9" fill="#1f73b4"/><path d="M8.3 7.8 L8.9 7.8 L8.9 11.2 Q9 12.3 10.3 12.6" fill="none" stroke="#1f73b4" stroke-width="1.2"/></svg>
<div class="t" style="left:255px;top:696px;font-size:13px;line-height:13px;color:#111;">002</div>
<div class="t" style="left:335.5px;top:696px;font-size:13px;line-height:13px;color:#111;letter-spacing:-0.16px;">Dodavatel - školení 3</div>
<div class="t" style="left:685px;top:696px;font-size:13px;line-height:13px;color:#111;">12345678</div>
<div class="t" style="left:785px;top:696px;font-size:13px;line-height:13px;color:#111;letter-spacing:-0.12px;">22. 5. 2025 8:42</div>
<div class="t" style="left:935px;top:696px;font-size:13px;line-height:13px;color:#111;letter-spacing:-0.2px;">Otevřena</div>
<svg class="a" style="left:1142.4px;top:696px;" width="10" height="10" viewBox="0 0 10 10"><path d="M1 1.1 L8.9 9 M8.9 1.1 L1 9" stroke="#d0202a" stroke-width="2"/></svg>
<svg class="a" style="left:1282.4px;top:696px;" width="10" height="10" viewBox="0 0 10 10"><path d="M1 1.1 L8.9 9 M8.9 1.1 L1 9" stroke="#d0202a" stroke-width="2"/></svg>
<div class="a" style="left:181px;top:714px;width:1222px;height:1px;background:#e3e3e3"></div>
<svg class="a" style="left:191px;top:724px;" width="19" height="6" viewBox="0 0 19 6"><circle cx="4" cy="3" r="1.8" fill="none" stroke="#1f73b4" stroke-width="1.3"/><circle cx="10" cy="3" r="1.8" fill="none" stroke="#1f73b4" stroke-width="1.3"/><circle cx="16" cy="3" r="1.8" fill="none" stroke="#1f73b4" stroke-width="1.3"/></svg>
<svg class="a" style="left:218px;top:718px;" width="18" height="18" viewBox="0 0 18 18"><circle cx="9" cy="9" r="7.4" fill="none" stroke="#1f73b4" stroke-width="1.3"/><circle cx="8.8" cy="5.6" r="0.9" fill="#1f73b4"/><path d="M8.3 7.8 L8.9 7.8 L8.9 11.2 Q9 12.3 10.3 12.6" fill="none" stroke="#1f73b4" stroke-width="1.2"/></svg>
<div class="t" style="left:255px;top:721px;font-size:13px;line-height:13px;color:#111;">003</div>
<div class="t" style="left:335.5px;top:721px;font-size:13px;line-height:13px;color:#111;letter-spacing:-0.16px;">Dodavatel - školení 5</div>
<div class="t" style="left:685px;top:721px;font-size:13px;line-height:13px;color:#111;">12345678</div>
<div class="t" style="left:785px;top:721px;font-size:13px;line-height:13px;color:#111;letter-spacing:-0.12px;">22. 5. 2025 8:43</div>
<div class="t" style="left:935px;top:721px;font-size:13px;line-height:13px;color:#111;letter-spacing:-0.2px;">Otevřena</div>
<svg class="a" style="left:1142.4px;top:721px;" width="10" height="10" viewBox="0 0 10 10"><path d="M1 1.1 L8.9 9 M8.9 1.1 L1 9" stroke="#d0202a" stroke-width="2"/></svg>
<svg class="a" style="left:1282.4px;top:721px;" width="10" height="10" viewBox="0 0 10 10"><path d="M1 1.1 L8.9 9 M8.9 1.1 L1 9" stroke="#d0202a" stroke-width="2"/></svg>
<div class="a" style="left:181px;top:739px;width:1222px;height:1px;background:#e3e3e3"></div>
<svg class="a" style="left:191px;top:749px;" width="19" height="6" viewBox="0 0 19 6"><circle cx="4" cy="3" r="1.8" fill="none" stroke="#1f73b4" stroke-width="1.3"/><circle cx="10" cy="3" r="1.8" fill="none" stroke="#1f73b4" stroke-width="1.3"/><circle cx="16" cy="3" r="1.8" fill="none" stroke="#1f73b4" stroke-width="1.3"/></svg>
<svg class="a" style="left:218px;top:743px;" width="18" height="18" viewBox="0 0 18 18"><circle cx="9" cy="9" r="7.4" fill="none" stroke="#1f73b4" stroke-width="1.3"/><circle cx="8.8" cy="5.6" r="0.9" fill="#1f73b4"/><path d="M8.3 7.8 L8.9 7.8 L8.9 11.2 Q9 12.3 10.3 12.6" fill="none" stroke="#1f73b4" stroke-width="1.2"/></svg>
<div class="t" style="left:255px;top:746px;font-size:13px;line-height:13px;color:#111;">004</div>
<div class="t" style="left:335.5px;top:746px;font-size:13px;line-height:13px;color:#111;letter-spacing:-0.16px;">Dodavatel - školení 6</div>
<div class="t" style="left:685px;top:746px;font-size:13px;line-height:13px;color:#111;">45359326</div>
<div class="t" style="left:785px;top:746px;font-size:13px;line-height:13px;color:#111;letter-spacing:-0.12px;">22. 5. 2025 8:43</div>
<div class="t" style="left:935px;top:746px;font-size:13px;line-height:13px;color:#111;letter-spacing:-0.2px;">Otevřena</div>
<svg class="a" style="left:1142.4px;top:746px;" width="10" height="10" viewBox="0 0 10 10"><path d="M1 1.1 L8.9 9 M8.9 1.1 L1 9" stroke="#d0202a" stroke-width="2"/></svg>
<svg class="a" style="left:1282.4px;top:746px;" width="10" height="10" viewBox="0 0 10 10"><path d="M1 1.1 L8.9 9 M8.9 1.1 L1 9" stroke="#d0202a" stroke-width="2"/></svg>
<div class="a" style="left:181px;top:764px;width:1222px;height:1px;background:#e3e3e3"></div>
<svg class="a" style="left:191px;top:774px;" width="19" height="6" viewBox="0 0 19 6"><circle cx="4" cy="3" r="1.8" fill="none" stroke="#1f73b4" stroke-width="1.3"/><circle cx="10" cy="3" r="1.8" fill="none" stroke="#1f73b4" stroke-width="1.3"/><circle cx="16" cy="3" r="1.8" fill="none" stroke="#1f73b4" stroke-width="1.3"/></svg>
<svg class="a" style="left:218px;top:768px;" width="18" height="18" viewBox="0 0 18 18"><circle cx="9" cy="9" r="7.4" fill="none" stroke="#1f73b4" stroke-width="1.3"/><circle cx="8.8" cy="5.6" r="0.9" fill="#1f73b4"/><path d="M8.3 7.8 L8.9 7.8 L8.9 11.2 Q9 12.3 10.3 12.6" fill="none" stroke="#1f73b4" stroke-width="1.2"/></svg>
<div class="t" style="left:255px;top:771px;font-size:13px;line-height:13px;color:#111;">006</div>
<div class="t" style="left:335.5px;top:771px;font-size:13px;line-height:13px;color:#111;letter-spacing:-0.16px;">Dodavatel - školení 6</div>
<div class="t" style="left:685px;top:771px;font-size:13px;line-height:13px;color:#111;">45359326</div>
<div class="t" style="left:785px;top:771px;font-size:13px;line-height:13px;color:#111;letter-spacing:-0.12px;">22. 5. 2025 8:44</div>
<div class="t" style="left:935px;top:771px;font-size:13px;line-height:13px;color:#111;letter-spacing:-0.2px;">Otevření zaevidováno</div>
<svg class="a" style="left:1142.4px;top:771px;" width="10" height="10" viewBox="0 0 10 10"><path d="M1 1.1 L8.9 9 M8.9 1.1 L1 9" stroke="#d0202a" stroke-width="2"/></svg>
<svg class="a" style="left:1281.8px;top:771px;" width="12" height="10" viewBox="0 0 12 10"><path d="M1.1 5.6 L4 8.4 L10.6 1.9" fill="none" stroke="#33b24a" stroke-width="1.8"/></svg>
<div class="a" style="left:181px;top:789px;width:1222px;height:1px;background:#e3e3e3"></div>
<svg class="a" style="left:191px;top:799px;" width="19" height="6" viewBox="0 0 19 6"><circle cx="4" cy="3" r="1.8" fill="none" stroke="#1f73b4" stroke-width="1.3"/><circle cx="10" cy="3" r="1.8" fill="none" stroke="#1f73b4" stroke-width="1.3"/><circle cx="16" cy="3" r="1.8" fill="none" stroke="#1f73b4" stroke-width="1.3"/></svg>
<svg class="a" style="left:218px;top:793px;" width="18" height="18" viewBox="0 0 18 18"><circle cx="9" cy="9" r="7.4" fill="none" stroke="#1f73b4" stroke-width="1.3"/><circle cx="8.8" cy="5.6" r="0.9" fill="#1f73b4"/><path d="M8.3 7.8 L8.9 7.8 L8.9 11.2 Q9 12.3 10.3 12.6" fill="none" stroke="#1f73b4" stroke-width="1.2"/></svg>
<div class="t" style="left:255px;top:796px;font-size:13px;line-height:13px;color:#111;">005</div>
<div class="t" style="left:335.5px;top:796px;font-size:13px;line-height:13px;color:#111;letter-spacing:-0.16px;">Dodavatel - školení 7</div>
<div class="t" style="left:685px;top:796px;font-size:13px;line-height:13px;color:#111;">12345678</div>
<div class="t" style="left:785px;top:796px;font-size:13px;line-height:13px;color:#111;letter-spacing:-0.12px;">22. 5. 2025 8:44</div>
<div class="t" style="left:935px;top:796px;font-size:13px;line-height:13px;color:#111;letter-spacing:-0.2px;">Otevřena</div>
<svg class="a" style="left:1142.4px;top:796px;" width="10" height="10" viewBox="0 0 10 10"><path d="M1 1.1 L8.9 9 M8.9 1.1 L1 9" stroke="#d0202a" stroke-width="2"/></svg>
<svg class="a" style="left:1282.4px;top:796px;" width="10" height="10" viewBox="0 0 10 10"><path d="M1 1.1 L8.9 9 M8.9 1.1 L1 9" stroke="#d0202a" stroke-width="2"/></svg>
<div class="a" style="left:181px;top:814px;width:1222px;height:1px;background:#e3e3e3"></div>
<div class="a" style="left:181px;top:815px;width:1222px;height:12px;background:#f3f3f3;border-radius:0 0 7px 7px"></div>
<div class="a" style="left:183px;top:817px;width:1097px;height:8px;background:#c1c1c1;border-radius:4px"></div>
<div class="a" style="left:1358px;top:665px;width:45px;height:150px;background:linear-gradient(to right, rgba(235,235,235,0), rgba(228,228,228,0.85))"></div>
<div class="a" style="left:1370px;top:628px;width:33px;height:36px;background:linear-gradient(to right, rgba(230,230,230,0), rgba(225,225,225,0.6))"></div>
</body></html>
